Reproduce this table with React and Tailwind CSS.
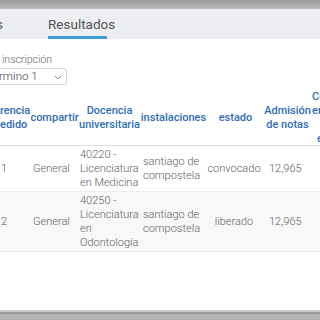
export default function App() {
  const cols = "grid grid-cols-[30px_49px_61px_67px_54px_53px_30px]"

  const rows = [
    {
      n: "1",
      tipo: "General",
      docencia: ["40220 -", "Licenciatura", "en Medicina"],
      lugar: ["santiago de", "compostela"],
      estado: "convocado",
      nota: "12,965",
      bg: "bg-white",
      h: "h-[46px]",
    },
    {
      n: "2",
      tipo: "General",
      docencia: ["40250 -", "Licenciatura", "en", "Odontología"],
      lugar: ["santiago de", "compostela"],
      estado: "liberado",
      nota: "12,965",
      bg: "bg-[#f8f8f8]",
      h: "h-[60px]",
    },
  ]

  return (
    <div className="h-[320px] w-[320px] overflow-hidden bg-white flex flex-col font-['Roboto',sans-serif]">
      {/* window chrome */}
      <div className="h-[9px] shrink-0 bg-gradient-to-b from-[#9c9c9c] to-[#b9b9b9]" />

      {/* tabs */}
      <div className="h-[30px] shrink-0 bg-[#eceef2] flex items-stretch text-[13.5px] text-[#555]">
        <div className="w-[6px] overflow-hidden flex items-center">
          <span className="-ml-[4px]">s</span>
        </div>
        <div className="ml-[42px] flex flex-col justify-center border-b-[3px] border-[#3f9ddb] pt-[3px]">
          <span className="w-[59px] text-center">Resultados</span>
        </div>
      </div>

      <div className="flex-1 flex flex-col">
        {/* convocatoria filter */}
        <div className="pt-[14px] pl-[2px] text-[10.5px] leading-[14px] text-[#666] font-light">inscripción</div>
        <div className="mt-[1px] h-[17px] w-[67px] border border-l-0 border-[#d4d4d4] rounded-r-[4px] flex items-center justify-between pr-[4px] text-[11.5px] text-[#444] font-light">
          <span className="-ml-[1px]">rmino 1</span>
          <svg width="8" height="5" viewBox="0 0 8 5" className="mt-[1px]">
            <path d="M1 1l3 3 3-3" fill="none" stroke="#888" strokeWidth="1" />
          </svg>
        </div>

        {/* table */}
        <div className="mt-[3px] w-[342px]">
          <div className={`${cols} border-b border-[#dedede] text-[11px] leading-[14px] font-medium text-[#2f6db5] h-[58px]`}>
            <div className="flex flex-col justify-center pt-[2px]">
              <span>rencia</span>
              <span>edido</span>
            </div>
            <div className="flex items-center justify-center pt-[2px]">compartir</div>
            <div className="flex flex-col items-center justify-center text-center pt-[2px]">
              <span>Docencia</span>
              <span>universitaria</span>
            </div>
            <div className="flex items-center justify-center pt-[2px]">instalaciones</div>
            <div className="flex items-center justify-center pt-[2px] pl-[3px]">estado</div>
            <div className="flex flex-col items-center justify-center text-center pt-[2px]">
              <span>Admisión</span>
              <span>de notas</span>
            </div>
            <div className="flex flex-col justify-start pt-[2px] -ml-[2px]">
              <span>Corte</span>
              <span>en</span>
              <span>&nbsp;</span>
              <span className="pl-[5px]">el</span>
            </div>
          </div>

          {rows.map((r) => (
            <div
              key={r.n}
              className={`${cols} ${r.bg} ${r.h} border-b border-[#ececec] text-[11px] leading-[14px] font-light text-[#606060]`}
            >
              <div className="flex items-center pl-[1px]">{r.n}</div>
              <div className="flex items-center pl-[3px]">{r.tipo}</div>
              <div className="flex flex-col justify-center pl-[1px]">
                {r.docencia.map((l) => (
                  <span key={l}>{l}</span>
                ))}
              </div>
              <div className="flex flex-col justify-center pl-[3px]">
                {r.lugar.map((l) => (
                  <span key={l}>{l}</span>
                ))}
              </div>
              <div className="flex items-center justify-center">{r.estado}</div>
              <div className="flex items-center pl-[8px]">{r.nota}</div>
              <div />
            </div>
          ))}
        </div>
      </div>

      {/* bottom chrome */}
      <div className="h-[10px] shrink-0 flex flex-col">
        <div className="h-[2px] bg-[#c8c8c8]" />
        <div className="h-[2px] bg-[#9a9a9a]" />
        <div className="flex-1 bg-[#b4b4b4]" />
      </div>
    </div>
  )
}
